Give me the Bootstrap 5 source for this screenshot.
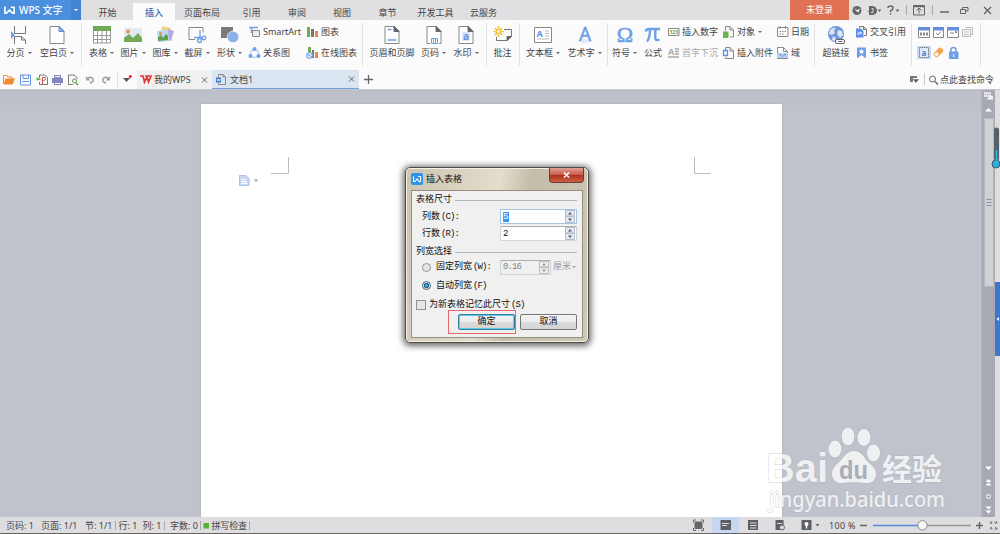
<!DOCTYPE html>
<html lang="zh-CN">
<head>
<meta charset="utf-8">
<title>WPS 文字</title>
<link href="https://cdn.jsdelivr.net/npm/bootstrap@5.3.0/dist/css/bootstrap.min.css" rel="stylesheet">
<style>
body{width:1000px;height:534px;overflow:hidden;font:9px/12px "Noto Sans","Noto Sans CJK SC",sans-serif;color:#444;background:#fbfbfb}
svg{display:block;flex:none;overflow:visible}
.f-s{flex:none}
.titlebar{height:20px;background:#e0e0e2}
.brand{width:81px;background:#4a90df;color:#fff;font-size:10px;font-weight:500;padding-left:4px;white-space:nowrap}
.brand .drop{width:10px;height:20px;background:#4384d2;margin-left:auto}
.caret{display:inline-block;flex:none;border:2px solid transparent;border-top:2.5px solid #666;border-bottom:0;margin-left:3px}
.menu-tabs{display:grid;grid-template-columns:52px 42px 53px 46px 45px 45px 46px 50px 46px}
.menu-tabs>div{display:flex;align-items:center;justify-content:center;padding:5px 0 0 1px}
.menu-tabs .on{background:#fbfbfb;color:#2f6fbe;margin-top:3px;padding:2px 0 0;font-weight:500}
.login{width:59px;background:#e07152;color:#fff}
.winbtns{width:151px;height:20px}
.ribbon{height:50px;display:grid;grid-template-columns:38px 38px 10px 31px 32px 32px 32px 33px 58px 56px 5px 54px 29px 36px 4px 29px 4px 44px 39px 6px 29px 28px 54px 54px 37px 5px 38px 54px 4px 65px 4px}
.tool{display:flex;flex-direction:column;align-items:center;padding-top:6px;white-space:nowrap}
.tool>span{display:flex;align-items:center;margin-top:3px;height:12px}
.pair{display:flex;flex-direction:column;padding:6px 0 0 3px;gap:9px;white-space:nowrap}
.pair>div{height:12px;display:flex;align-items:center;gap:3px}
.pair svg{width:11px;height:12px}
.rule{width:1px;height:43px;background:#e2e2e4;margin:3px auto 0}
.off{color:#aaa}
.tabstrip{height:20px;border-bottom:1px solid #c5c7ce}
.quick{width:137px;height:19px}
.doc-tab{height:19px;padding-right:5px}
.home-tab{width:75px;background:#f0f0f1;padding-left:3px}
.file-tab{width:147px;background:#dbe4f1;border-bottom:1.5px solid #6f9fdc;padding-left:4px}
.search{width:92px}
.desk{height:427px;background:linear-gradient(#bcbfc9,#c0c3cc 25px)}
.sheet{width:581px;height:413px;margin:14px 0 0 201px;background:#fff;box-shadow:0 0 2px #aaacb5}
.vbar{width:14px;margin-left:auto;background:#a9a9b3;height:427px;border-left:1px solid #b4b5be}
.vthumb{width:10px;height:169px;background:#d0d1d5;border:1px solid #b7b8bf;margin-left:2px}
.edge{width:5px;height:427px;background:#dedede}
.edge i{display:block;width:5px;height:74px;background:#3b78cb;margin-top:192px}
.status{height:16px;background:#dedee0}
.foot{height:1px;background:#66625e}
.dlg{position:absolute;left:405px;top:167px;width:184px;height:176px;border:1px solid #4e4b46;border-radius:5px;background:linear-gradient(100deg,#cbc4b1,#e3ddcd 45%,#c4bda9 60%,#cdc7b6);box-shadow:0 1px 6px 2px #444c,inset 0 0 0 1px #f5f1e6;font-family:"Liberation Mono","Noto Sans CJK SC",monospace;color:#111;padding:0 5px;white-space:nowrap}
.dlg-head{height:22px;font-family:"Noto Sans","Noto Sans CJK SC",sans-serif}
.dlg-x{width:35px;height:15px;align-self:flex-start;margin-right:-1px;background:linear-gradient(#dfa093,#c95d4b 48%,#ac2f1c 52%,#cf604b);border:1px solid #6e3a32;border-top:0;border-radius:0 0 4px 4px}
.dlg-body{height:148px;background:#f0f0f0;border:1px solid #958f82;padding:3px 5px 0 4px}
.lt{font-size:9px;letter-spacing:-.9px;margin-left:1px}
.legend-row{height:12px;gap:3px}
.legend-row::after{content:"";flex:1;height:1px;background:#b5b5b5}
.field-row{height:17px;display:flex;align-items:center;padding-left:6px}
.spin{margin-left:auto;width:77px;height:15px;background:#fff;border:1px solid #d0d5da;border-top-color:#aab0b5;display:flex;align-items:center;padding-left:1px}
.spin.focus-in{border-color:#a6c7e4}
.spin .picked{background:#39f;color:#fff;line-height:10px;padding-right:1px}
.spin.dis{width:51px;background:#f0f0f0;color:#888;margin-left:auto}
.steps{margin-left:auto;width:11px}
.choice{height:19px;display:flex;align-items:center;padding-left:6px}
.ring{width:9px;height:9px;border-radius:50%;border:1px solid #949494;background:#e6e6e6;margin-right:5px;flex:none}
.ring.sel{border-color:#46677a;background:radial-gradient(circle,#38b5df 0 1px,#164e76 2.2px,#e0e8ec 3px)}
.tick{width:10px;height:10px;border:1px solid #939393;background:#e5e5e5;margin-right:3px}
.unit{color:#999;margin-left:2px;width:24px;display:flex;align-items:center}
.dlg-btn{width:57px;height:16px;border:1px solid #777;border-radius:2px;background:linear-gradient(#f4f4f4,#ebebeb 50%,#dcdcdc 51%,#d3d3d3);display:flex;align-items:center;justify-content:center}
.dlg-btn.ok{border-color:#367e9e;box-shadow:inset 0 0 0 1px #61c9ee}
.over{position:absolute}
.hint{left:448px;top:310px;width:68px;height:24px;border:1px solid #e8686c}
</style>
</head>
<body class="position-relative">
<header class="titlebar d-flex">
  <div class="brand d-flex align-items-center">
    <svg width="11" height="9" viewBox="0 0 12 9" fill="none" stroke="#fff" stroke-width="1.8"><path d="M1 0v7.500h1.500L6 4l3.500 3.500H11V1H7.500"/></svg>
    <span class="ms-1">WPS 文字</span>
    <span class="drop d-flex align-items-center justify-content-center"><i class="caret m-0" style="border-top-color:#fff"></i></span>
  </div>
  <nav class="menu-tabs">
    <div>开始</div><div class="on">插入</div><div>页面布局</div><div>引用</div><div>审阅</div><div>视图</div><div>章节</div><div>开发工具</div><div>云服务</div>
  </nav>
  <div class="login d-flex align-items-center justify-content-center ms-auto">未登录</div>
  <svg class="winbtns" viewBox="849 0 151 20" fill="none" stroke="#666" stroke-width="1">
    <circle cx="857" cy="10.500" r="4.500" fill="#666" stroke="none"/><path d="m854.500 8.500 2.500 1.500 3-1.500-1.500 4-2-1z" fill="#e4e4e6" stroke="none"/>
    <path d="M869 6h4q4 1 4 4.500t-4 4.500h-4v-3h-1l1-2z" fill="#666" stroke="none"/><path d="M871.500 8.500h1.500v4h-2" stroke="#ddd"/>
    <path d="M877.500 9.500h4l-2 2.500zM895.500 9.500h4l-2 2.500z" fill="#666" stroke="none"/>
    <path d="M888 8q0-2 2.500-2t2.500 2-2.500 3v1M890.500 13v1.500" stroke-width="1.500"/>
    <path d="M906.500 5v10M932.500 5v10" stroke="#aaa"/>
    <path d="M913.500 5.500h11v9.500h-11zM919 13.500V8.500M916.500 10.500l2.500-2.500 2.500 2.500" /><path d="M914 6.500h10" stroke-width="1.500"/>
    <path d="M940 12h9" stroke-width="1.500"/><path d="M960.500 9.500h5v4h-5zM962.500 9V7.500h5.500v3.500h-2"/>
    <path d="m984 7 7 7m0-7-7 7" stroke-width="1.400"/>
  </svg>
</header>

<section class="ribbon">
  <div class="tool"><svg width="18" height="18" viewBox="0 0 18 18" fill="none" stroke="#777"><path d="M4.500 0v7.500h11V0M4.500 18v-7.500h7l4 3.500v4M11.500 10.500V14h4"/><path d="M1 5v8l4-4z" fill="#6f9fe8" stroke="none"/></svg><span>分页<i class="caret"></i></span></div>
  <div class="tool"><svg width="16" height="18" viewBox="0 0 16 18" fill="#fff" stroke="#888"><path d="M1 .5h9.500L15 5v12.500H1z"/><path d="M10 .5V5.500h5z" fill="#8fb4f0" stroke="#5b8de0"/></svg><span>空白页<i class="caret"></i></span></div>
  <div><div class="rule"></div></div>
  <div class="tool"><svg width="18" height="18" viewBox="0 0 18 18" fill="#fff" stroke="#999"><path d="M.5 1.500h17v15.500H.5zM.5 9.500h17M.5 13.500h17M4.500 5v12M9 5v12M13.500 5v12"/><path d="M0 0h18v5H0z" fill="#6fa957" stroke="none"/></svg><span>表格<i class="caret"></i></span></div>
  <div class="tool"><svg width="18" height="18" viewBox="0 0 18 18"><path d="M0 2h18v14H0z" fill="#e3e9f2"/><path d="m0 16v-4l5-4 4 4 5-5 4 5v4z" fill="#73a856"/><circle cx="4" cy="5.500" r="2" fill="#f0914d"/></svg><span>图片<i class="caret"></i></span></div>
  <div class="tool"><svg width="18" height="18" viewBox="0 0 18 18"><path d="m6 0 9 2-2 11-9-2z" fill="#f2d488"/><path d="m12 3 6 2-3 10-7-2z" fill="#b8a9e0"/><path d="m1 5 11-1 1 11-11 1z" fill="#b8d7f2"/><path d="m2 15 0-4 3-2 2 3 3-4 2 2v4z" fill="#5fa246"/><circle cx="4.500" cy="7.500" r="1.500" fill="#ef8d49"/></svg><span>图库<i class="caret"></i></span></div>
  <div class="tool"><svg width="18" height="18" viewBox="0 0 18 18" fill="none" stroke="#888"><path d="M7 13.500H1V1.500h14v5"/><g stroke="#6f9fe8" stroke-width="1.300"><path d="M12 4v7l4 3M6 11.500h8"/><circle cx="11.500" cy="14.500" r="2"/><circle cx="16" cy="12" r="1.800"/></g></svg><span>截屏<i class="caret"></i></span></div>
  <div class="tool"><svg width="18" height="18" viewBox="0 0 18 18"><path d="M0 1h12v11H0z" fill="#7b7b7d"/><circle cx="12" cy="11" r="5.800" fill="#8cb0ea" stroke="#fbfbfb" stroke-width=".7"/></svg><span>形状<i class="caret"></i></span></div>
  <div class="pair">
    <div><svg viewBox="0 0 11 12" fill="none"><path d="M0 1.500h9M2.500 2v5" stroke="#6f9fe8" stroke-width="1.500"/><path d="M3.500 4.500h7v6h-7z" fill="#eee" stroke="#888"/></svg>SmartArt</div>
    <div><svg viewBox="0 0 11 12" fill="none" stroke="#9dbcec"><circle cx="5.500" cy="6.500" r="4"/><g fill="#6f9fe8" stroke="none"><circle cx="5.500" cy="2" r="2"/><circle cx="1.500" cy="9" r="2"/><circle cx="9.500" cy="9" r="2"/></g></svg>关系图</div>
  </div>
  <div class="pair">
    <div><svg viewBox="0 0 11 12"><path d="M0 1h3v10H0z" fill="#6fae51"/><path d="M4 3h3v8H4z" fill="#777"/><path d="M8 5h3v6H8z" fill="#ef8350"/></svg>图表</div>
    <div><svg viewBox="0 0 11 12"><path d="M1 0h3v7H1z" fill="#6fae51"/><path d="M5 3h2v8H5z" fill="#777"/><path d="M8 5h3v6H8z" fill="#ef8350"/><circle cx="2.500" cy="8.500" r="3" fill="#d6e5fa" stroke="#6f9fe8"/><path d="m0 7 5 3" stroke="#6f9fe8"/></svg>在线图表</div>
  </div>
  <div><div class="rule"></div></div>
  <div class="tool"><svg width="16" height="18" viewBox="0 0 16 18" fill="#fff" stroke="#888"><path d="M1 .5h9.500L15 5v12.500H1z"/><path d="M10 .5V5.500h5z" fill="#666" stroke="#666"/><path d="M3.500 3.500h4M3.500 14h9" stroke="#6f9fe8" stroke-width="1.500"/></svg><span>页眉和页脚</span></div>
  <div class="tool"><svg width="16" height="18" viewBox="0 0 16 18" fill="#fff" stroke="#888"><path d="M4 17.500H1V.5h9.500L15 5v12.500h-2"/><path d="M10 .5V5.500h5z" fill="#666" stroke="#666"/><path d="M5.500 12.500h6v5h-6zM7.500 12.500v5M9.500 12.500v5" stroke="#6f9fe8"/></svg><span>页码<i class="caret"></i></span></div>
  <div class="tool"><svg width="16" height="18" viewBox="0 0 16 18" fill="#fff" stroke="#888"><path d="M1 .5h9.500L15 5v12.500H1z"/><path d="M10 .5V5.500h5z" fill="#666" stroke="#666"/><path d="M4 6h8v9H4z" fill="#d9e6fa" stroke="none"/><text x="5" y="13.500" font-size="10" font-weight="bold" fill="#5f90e2" stroke="none">a</text></svg><span>水印<i class="caret"></i></span></div>
  <div><div class="rule"></div></div>
  <div class="tool"><svg width="18" height="18" viewBox="0 0 18 18" fill="none" stroke="#777"><path d="M10 3.500h7.500v7l-4 4H2.500V11M17 10.500h-4v4"/><path d="m13 15 5-5h-5z" fill="#666" stroke="none"/><g stroke="#f3bb30" stroke-width="1.500"><circle cx="4.500" cy="5.500" r="2.200"/><path d="M4.500 0v2M4.500 9v2M-.5 5.500h2M7.500 5.500h2M1 2l1.500 1.500M6.500 7.500 8 9M8 2 6.500 3.500M1 9l1.500-1.500"/></g></svg><span>批注</span></div>
  <div><div class="rule"></div></div>
  <div class="tool"><svg width="18" height="18" viewBox="0 0 18 18" fill="#fff" stroke="#888"><path d="M.5 1.500h17v15H.5z"/><path d="M11 5h4M11 7.500h4M11 10h4M3 13h12" stroke="#bbb"/><text x="2.500" y="10.500" font-size="9" font-weight="bold" fill="#5d8fe5" stroke="none">A</text></svg><span>文本框<i class="caret"></i></span></div>
  <div class="tool"><svg width="18" height="18" viewBox="0 0 18 18"><ellipse cx="9" cy="15" rx="6" ry="2" fill="#e3eaf8"/><text x="9" y="14.500" font-size="19" text-anchor="middle" fill="#6f9fe8" stroke="#6f9fe8" stroke-width=".5">A</text></svg><span>艺术字<i class="caret"></i></span></div>
  <div><div class="rule"></div></div>
  <div class="tool"><svg width="18" height="18" viewBox="0 0 18 18"><text x="9" y="16" font-size="22" text-anchor="middle" fill="#6f9fe8" stroke="#6f9fe8" stroke-width=".6" font-family="Liberation Serif">Ω</text></svg><span>符号<i class="caret"></i></span></div>
  <div class="tool"><svg width="18" height="18" viewBox="0 0 18 18" fill="none" stroke="#6f9fe8" stroke-width="2.400"><path d="M1.500 5.500Q2.500 3 5 3h11M6 3q0 9-3 12.500M11.500 3q-.5 8 0 10t4 .5"/></svg><span>公式</span></div>
  <div class="pair" style="padding-left:1px">
    <div><svg viewBox="0 0 11 12" fill="none"><path d="M.5 2.500h10.500v7H.5z" stroke="#888"/><text x="1.500" y="8" font-size="5" font-weight="bold" fill="#5b9a42">123</text></svg>插入数字</div>
    <div class="off"><svg viewBox="0 0 11 12" fill="none" stroke="#aaa"><path d="M7 2h4M7 4.500h4M7 7h4M0 10h11" stroke-width="1.500"/><text x="0" y="8" font-size="9" font-weight="bold" fill="#aaa" stroke="none">A</text></svg>首字下沉</div>
  </div>
  <div class="pair" style="padding-left:2px">
    <div><svg viewBox="0 0 11 12" fill="none" stroke="#888"><path d="M2.500 5V.5H7l3.500 3.500v7H7M7 .5V4h3.500"/><path d="M0 5.500h5.500V12H0z" fill="#6fae51" stroke="none"/></svg>对象<i class="caret m-0"></i></div>
    <div><svg viewBox="0 0 11 12" fill="none" stroke="#888"><path d="M2.500 3V.5H7l3.500 3.500v7.500h-8V10M7 .5V4h3.500"/><path d="M.5 3.500h4v5h-4z" stroke="#5d8fe5" stroke-width="1.300"/></svg>插入附件</div>
  </div>
  <div class="pair" style="padding-left:2px">
    <div><svg viewBox="0 0 11 12" fill="none" stroke="#888"><path d="M.5 1.500h10.500v9H.5zM3 0v3M8.500 0v3"/><path d="M2.500 5.500h7M2.500 8h5" stroke-dasharray="1.500 1"/></svg>日期</div>
    <div><svg viewBox="0 0 11 12" fill="none" stroke="#888"><path d="M.5.5h6l4 4v7H.5zM6.500.5v4h4"/><path d="M0 6h11v5H0z" fill="#b9cff4" stroke="none"/><path d="m2 7 3.500 2.500L9 7" stroke="#5d8fe5"/></svg>域</div>
  </div>
  <div><div class="rule"></div></div>
  <div class="tool"><svg width="18" height="18" viewBox="0 0 18 18"><circle cx="9" cy="8" r="8" fill="#6f96d8"/><path d="M3 4q3-3 6-2l-2 3 1 2-3 2-3-1zM11 4l4 1 1 4-3 3-3-4zM6 10l3 2-1 3-3-1z" fill="#d9e4f5"/><rect x="8.500" y="13.500" width="9" height="4" rx="1.500" fill="#fff" stroke="#666"/><path d="M11 15.500h4.500" stroke="#666"/></svg><span>超链接</span></div>
  <div class="pair" style="padding-left:1px">
    <div><svg viewBox="0 0 11 12" fill="none" stroke="#777"><path d="M3.500 2V.5h4l3 3v6H8M7.500.5v3h3"/><path d="M0 2.500h5l2.500 2.500v6.500H0z" fill="#5d8fe5" stroke="none"/><path d="M2 9V7h3M4 5.500 5.500 7 4 8.500" stroke="#fff"/></svg>交叉引用</div>
    <div><svg viewBox="0 0 11 12"><path d="M1 .5h9v11L5.500 8 1 11.500z" fill="#6f9fe8"/><path d="m5.500 2 1 1.600 1.700.2-1.200 1.200.3 1.700-1.800-.8-1.800.8.3-1.700-1.200-1.200 1.700-.2z" fill="#fff"/></svg>书签</div>
  </div>
  <div><div class="rule"></div></div>
  <svg width="65" height="50" viewBox="913 20 65 50" fill="none" stroke="#888">
    <path d="M918.500 28.500h11v9h-11zM933.500 28.500h10v9h-10zM947.500 28.500h11v9h-11z" fill="#fff"/><path d="M918 27h12v3.500h-12zM933 27h11v3.500h-11zM947 27h12v3.500h-12z" fill="#668edb" stroke="none"/>
    <path d="M920 34h8" stroke-dasharray="2 1" stroke-width="3"/><path d="m936 33 2 2 3-3.500M950 33h4" /><path d="M955 32h2" stroke-width="2"/>
    <path d="M962.500 29.500h8v7h-8zM965.500 27.500h7v7h-2M964 32h5M964 34.500h5" stroke="#bbb"/>
    <path d="M917 46h14v13h-14z" fill="#c5d9f4" stroke="none"/><path d="M919.500 47.500h9v10h-9z" fill="#dfeaf9" stroke="#777" stroke-dasharray="1.500 .7"/><text x="921.500" y="55.500" font-size="8" font-weight="bold" fill="#4d80d0" stroke="none">a</text>
    <g transform="rotate(-45 938 52.500)"><rect x="933" y="50" width="10.500" height="5.500" rx="2" fill="#efa64e" stroke="none"/><rect x="934" y="51" width="3.500" height="3.500" rx="1" fill="#fff8ed" stroke="none"/></g>
    <path d="M951 52v-2q0-2.500 2.500-2.500T956 50v2" stroke="#6f9fe8" stroke-width="1.500"/><path d="M949 51.500h9.500V59H949z" fill="#6f9fe8" stroke="none"/><path d="M953.700 54v3" stroke="#fff"/>
  </svg>
  <div><div class="rule"></div></div>
</section>

<section class="tabstrip d-flex align-items-start">
  <svg class="quick" viewBox="0 70 137 19" fill="none" stroke="#777">
    <path d="M3.500 83.500v-8H7l1 1.500h4v2" stroke="#f08a2c"/><path d="m3.500 84.500 2-6H15l-2.500 6z" fill="#f08a2c" stroke="none"/>
    <path d="M20.500 75h10v10h-10z" stroke="#6593df"/><path d="M23 75v3.500h5.500V75M22 81.500h7" stroke="#6593df"/>
    <path d="M39.500 78v-3h5l3 2.500v7h-8V82"/><path d="M42.500 84v-6.500H45q2 2-2 3.500" stroke="#e05258"/><path d="m36 79 2-2v1.500h2.500v1.500H38v1z" fill="#5fae45" stroke="none"/>
    <path d="M54 75h7v3h-7zM52 78h11v5H52zM54 82h7v3h-7z" fill="#8387bd" stroke="none"/><path d="M55 76.500h5M55 83.500h5" stroke="#fff"/>
    <path d="M73 84.500h-4.500V75H74l3 2.500V79"/><circle cx="74.500" cy="81" r="2" stroke="#5a9d43"/><path d="m76 83 2 2" stroke="#5a9d43" stroke-width="1.500"/>
    <path d="M87 79q3.500-3.500 6 0 1 3-3 4" stroke="#999" stroke-width="1.400"/><path d="m85.500 76 1 4.500h4z" fill="#999" stroke="none"/>
    <path d="M109 79q-3.500-3.500-6 0-1 3 3 4" stroke="#999" stroke-width="1.400"/><path d="m110.500 76-1 4.500h-4z" fill="#999" stroke="none"/>
    <path d="M117.500 73v14" stroke="#ddd"/><path d="M123 78h7l-3.500 4z" fill="#555" stroke="none"/><circle cx="130.300" cy="76.500" r="1.600" fill="#f3262c" stroke="none"/>
  </svg>
  <div class="doc-tab home-tab d-flex align-items-center">
    <svg width="12" height="9" viewBox="0 0 12 9" fill="none" stroke="#df3838" stroke-width="1.700"><path d="M0 1h3l1.500 6L7 2l1.500 5L11 1H5"/></svg>
    <span style="margin-left:2px">我的WPS</span>
    <svg class="ms-auto" width="5" height="6" viewBox="0 0 5 6" stroke="#666"><path d="m0 .5 5 5m0-5-5 5"/></svg>
  </div>
  <div class="doc-tab file-tab d-flex align-items-center">
    <svg width="10" height="11" viewBox="0 0 10 11" fill="none" stroke="#888"><path d="M2.500 3V.5H7l2.500 2.500v7.500h-7V9M7 .5V3h2.500"/><path d="M0 3.500h5v5H0z" fill="#3f78ca" stroke="none"/><path d="m1 5 .8 2 .7-2 .8 2 .7-2" stroke="#fff" stroke-width=".7"/></svg>
    <span style="margin-left:4px;padding-top:1px">文档1</span>
    <svg class="ms-auto" width="5" height="6" viewBox="0 0 5 6" stroke="#666"><path d="m0 .5 5 5m0-5-5 5"/></svg>
  </div>
  <svg width="18" height="19" viewBox="0 0 18 19" stroke="#666" stroke-width="1.300"><path d="M5 9.500h9M9.500 5v9"/></svg>
  <div class="search ms-auto d-flex align-items-center" style="height:19px">
    <svg width="32" height="19" viewBox="908 70 32 19" fill="none" stroke="#666"><path d="M910 76h7v2h-4v4h-3z" fill="#777" stroke="none"/><path d="M913.500 79.500h5L916 82.500z" fill="#555" stroke="#555" stroke-width=".5"/><path d="M924.500 73v12" stroke="#ccc"/><circle cx="932.500" cy="79" r="3"/><path d="m935 81.500 3 3" stroke-width="1.400"/></svg>
    <span class="text-nowrap">点此查找命令</span>
  </div>
</section>

<main class="desk d-flex overflow-hidden">
  <div class="sheet f-s">
    <svg width="581" height="100" viewBox="201 104 581 100" fill="none" stroke="#bdbdbd">
      <path d="M271 173.500h17.500V157M711 173.500h-16.500V157"/>
      <path d="M239.500 175.500h6.500l3 3v7h-9.500z" fill="#c5d7f1" stroke="#a9c2e6"/><path d="M241.500 179.500h4M241.500 181.500h5.500M241.500 183.500h5.500" stroke="#fff"/>
      <path d="M254 179.500h4l-2 2.500z" fill="#999" stroke="none"/>
    </svg>
  </div>
  <div class="vbar f-s">
    <svg width="13" height="28" viewBox="0 0 13 28"><path d="M2 2h7v5H2z" fill="#e2e2e6"/><path d="M3 4.500h5" stroke="#a9a9b3" stroke-dasharray="1 1"/><path d="m5 9.500 2.500-4L11 6v3.500z" fill="#f4f4f4"/><path d="M3 21.500 6.500 18l3.500 3.500z" fill="#fff"/></svg>
    <div class="vthumb"><svg width="8" height="167" viewBox="0 0 8 167" stroke="#8e8f97"><path d="M1.500 80.500h5M1.500 83.500h5M1.500 86.500h5"/></svg></div>
    <svg width="13" height="230" viewBox="0 287 13 230" fill="#fff"><path d="M3 466.500h7L6.500 470zM6.500 479l3 3h-6zM6.500 482.500l3 3h-6zM3.500 506.500h6l-3 3zM3.500 510.500h6l-3 3z"/><circle cx="6.500" cy="496.500" r="2" fill="none" stroke="#fff"/></svg>
  </div>
  <div class="edge f-s"><i></i></div>
</main>

<footer class="status d-flex align-items-center">
  <svg width="1000" height="16" viewBox="0 517 1000 16" fill="none" stroke="#666">
    <g font-size="9" fill="#444" stroke="none">
      <text x="6" y="528.500" textLength="28">页码: 1</text><text x="41" y="528.500" textLength="36.500">页面: 1/1</text><text x="85" y="528.500" textLength="27.500">节: 1/1</text><text x="118.500" y="528.500" textLength="19">行: 1</text><text x="142.500" y="528.500" textLength="19">列: 1</text><text x="170" y="528.500" textLength="28">字数: 0</text><text x="211.500" y="528.500" textLength="35.500">拼写检查</text>
      <text x="829" y="528.500" textLength="26.500">100 %</text>
    </g>
    <path d="M115.500 521v9M164.500 521v9M200.500 521v9M249.500 521v9" stroke="#aaa"/><path d="M203.500 523h5.500v5.500h-5.500z" fill="#56b336" stroke="none"/>
    <path d="M712 517h27v16h-27z" fill="#c6d8ef" stroke="none"/>
    <path d="M695 522h7v6.500h-7z" fill="#666"/><path d="M693.500 522.500V520h2.500M701 520h2.500v2.500M693.500 528v2.500h2.500M701 530.500h2.500V528"/>
    <path d="M720.500 520h10.500v10h-10.500zM748 520h10v10h-10zM775.500 520h8v10h-8zM801.500 520h10v10h-10z" fill="#5c6066" stroke="none"/>
    <path d="M722 523.500h7M722 525.500h5M750 523h6.500M750 525.500h6.500M750 528h6.500M777 523.500h5" stroke="#ddd"/>
    <circle cx="782" cy="527.500" r="2.500" fill="#ddd"/><circle cx="806.500" cy="524" r="2" fill="#fff" stroke="none"/><path d="M806.500 525v3.500" stroke="#fff" stroke-width="1.500"/>
    <path d="M815.500 524h4l-2 2.500z" fill="#666" stroke="none"/><path d="M860 525.500h7M976 525.500h7M979.500 522v7" stroke-width="1.500"/>
    <path d="M921 525.500h50" stroke="#999" stroke-width="1.300"/><path d="M873 525.500h46" stroke="#4f8edb" stroke-width="1.500"/><circle cx="922.500" cy="525.300" r="4.700" fill="#f7f7f7" stroke="#888"/>
    <path d="m990 522 2 2m5-2-2 2m-5 5 2-2m5 2-2-2M990.500 523.500V522h2M994.500 522h2.500v1.500M990.500 527.500V529h2M994.500 529h2.500v-1.500" stroke-width=".9"/>
  </svg>
</footer>
<div class="foot"></div>

<svg class="over" style="left:989px;top:125px" width="11" height="200" viewBox="989 125 11 200"><path d="M996.500 130v28" stroke="#53616c" stroke-width="5" stroke-linecap="round"/><circle cx="996" cy="164" r="4" fill="#27aede" stroke="#3d5967"/><path d="M996.500 150v13" stroke="#35bce9" stroke-width="1.500"/><path d="m996.500 319 2.500-2v4z" fill="#fff"/></svg>

<svg class="over" style="left:760px;top:420px" width="195" height="95" viewBox="760 420 195 95" fill="#fff" stroke="#a4a8b3" stroke-width="1.400" opacity=".75" paint-order="stroke" stroke-linejoin="round">
  <g stroke-opacity=".5">
  <text x="766" y="482" font-family="Liberation Sans" font-size="40" font-weight="bold" textLength="62" lengthAdjust="spacingAndGlyphs" paint-order="stroke">Bai</text>
  <ellipse cx="835" cy="449" rx="6.500" ry="8.500"/><ellipse cx="848" cy="436.500" rx="6.500" ry="9"/><ellipse cx="864" cy="437.500" rx="6.500" ry="8.500"/><ellipse cx="873.500" cy="453" rx="6.500" ry="8.500"/>
  <path d="M854 451c8 0 10 7 14 11 5 4 8 7 8 12 0 7-5 10-11 9-7-1-15-1-22 0-6 1-11-3-11-9 0-5 3-8 7-12 5-4 7-11 15-11z"/>
  <text x="839" y="479" font-family="Liberation Sans" font-size="25" font-weight="bold" fill="#a3a7b3" stroke="none" textLength="29" lengthAdjust="spacingAndGlyphs">du</text>
  <text x="882" y="480" font-family="Noto Sans CJK SC" font-weight="bold" font-size="30" textLength="60" paint-order="stroke">经验</text>
  <text x="769" y="507" font-family="Noto Sans" font-size="22" font-weight="500" textLength="176" lengthAdjust="spacingAndGlyphs" paint-order="stroke">jingyan.baidu.com</text>
  </g>
</svg>

<div class="dlg">
  <div class="dlg-head d-flex align-items-center">
    <svg width="12" height="12" viewBox="0 0 12 12"><rect width="12" height="12" rx="2" fill="#2d93e8"/><path d="M2.500 3.500v5H4L6 6l2 2.500h1.500v-5H7" fill="none" stroke="#fff" stroke-width="1.200"/></svg>
    <span style="margin-left:3px">插入表格</span>
    <div class="dlg-x ms-auto d-flex align-items-center justify-content-center"><svg width="7" height="6" viewBox="0 0 8 7" stroke="#fff" stroke-width="1.800"><path d="m1 .5 6 6m0-6-6 6"/></svg></div>
  </div>
  <div class="dlg-body">
    <div class="legend-row d-flex align-items-center">表格尺寸</div>
    <div class="field-row" style="margin-top:2px">列数<span class="lt">(C):</span><div class="spin focus-in"><span class="lt picked">5</span><svg class="steps" width="11" height="13" viewBox="0 0 11 13" fill="#e6e9ef" stroke="#b5bac4"><path d="M.5.500h9v5.500h-9zM.5 6.500h9v6h-9z"/><path d="M3 4.500h4l-2-2.500zM3 8.500h4L5 11z" fill="#44598a" stroke="none"/></svg></div></div>
    <div class="field-row">行数<span class="lt">(R):</span><div class="spin"><span class="lt">2</span><svg class="steps" width="11" height="13" viewBox="0 0 11 13" fill="#e6e9ef" stroke="#b5bac4"><path d="M.5.500h9v5.500h-9zM.5 6.500h9v6h-9z"/><path d="M3 4.500h4l-2-2.500zM3 8.500h4L5 11z" fill="#44598a" stroke="none"/></svg></div></div>
    <div class="legend-row d-flex align-items-center" style="margin-top:4px">列宽选择</div>
    <div class="choice" style="height:18px"><i class="ring"></i>固定列宽<span class="lt">(W):</span><div class="spin dis"><span class="lt">0.16</span><svg class="steps" width="11" height="13" viewBox="0 0 11 13" fill="#eee" stroke="#bbb"><path d="M.5.500h9v5.500h-9zM.5 6.500h9v6h-9z"/><path d="M3 4.500h4l-2-2.500zM3 8.500h4L5 11z" fill="#999" stroke="none"/></svg></div><span class="unit">厘米<i class="caret" style="border-top-color:#999;margin-left:1px"></i></span></div>
    <div class="choice"><i class="ring sel"></i>自动列宽<span class="lt">(F)</span></div>
    <div class="choice p-0"><i class="tick"></i>为新表格记忆此尺寸<span class="lt">(S)</span></div>
    <div class="d-flex justify-content-end" style="gap:5px"><div class="dlg-btn ok">确定</div><div class="dlg-btn">取消</div></div>
  </div>
</div>
<div class="over hint"></div>
<script src="https://cdn.jsdelivr.net/npm/bootstrap@5.3.0/dist/js/bootstrap.bundle.min.js"></script>
</body>
</html>
